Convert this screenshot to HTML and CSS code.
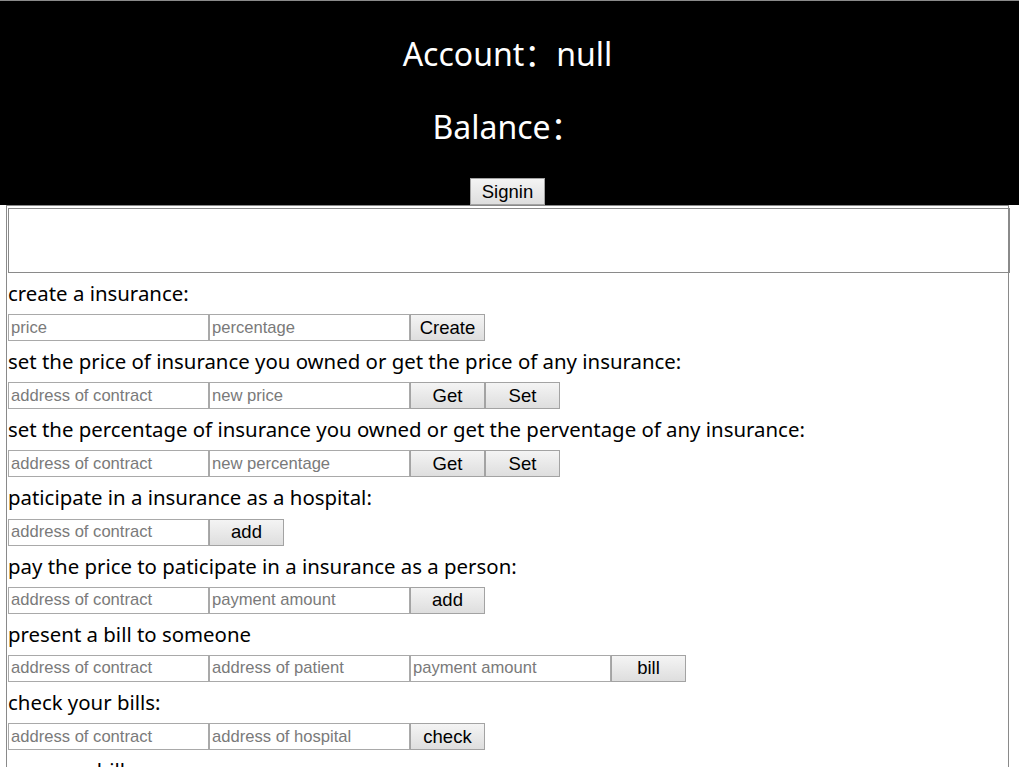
FILE: index.html
```html
<!DOCTYPE html>
<html>
<head>
<meta charset="utf-8">
<title>Insurance</title>
<link rel="stylesheet" href="styles.css">
</head>
<body>
<div class="header">
  <div class="title">Account：null</div>
  <div class="title title-second">Balance：</div>
  <button class="btn">Signin</button>
</div>
<div class="main">
  <div class="output"></div>

  <div class="label">create a insurance:</div>
  <div class="row">
    <input class="field" placeholder="price">
    <input class="field" placeholder="percentage">
    <button class="btn">Create</button>
  </div>

  <div class="label">set the price of insurance you owned or get the price of any insurance:</div>
  <div class="row">
    <input class="field" placeholder="address of contract">
    <input class="field" placeholder="new price">
    <button class="btn">Get</button>
    <button class="btn">Set</button>
  </div>

  <div class="label">set the percentage of insurance you owned or get the perventage of any insurance:</div>
  <div class="row">
    <input class="field" placeholder="address of contract">
    <input class="field" placeholder="new percentage">
    <button class="btn">Get</button>
    <button class="btn">Set</button>
  </div>

  <div class="label">paticipate in a insurance as a hospital:</div>
  <div class="row">
    <input class="field" placeholder="address of contract">
    <button class="btn">add</button>
  </div>

  <div class="label">pay the price to paticipate in a insurance as a person:</div>
  <div class="row">
    <input class="field" placeholder="address of contract">
    <input class="field" placeholder="payment amount">
    <button class="btn">add</button>
  </div>

  <div class="label">present a bill to someone</div>
  <div class="row">
    <input class="field" placeholder="address of contract">
    <input class="field" placeholder="address of patient">
    <input class="field" placeholder="payment amount">
    <button class="btn">bill</button>
  </div>

  <div class="label">check your bills:</div>
  <div class="row">
    <input class="field" placeholder="address of contract">
    <input class="field" placeholder="address of hospital">
    <button class="btn">check</button>
  </div>

  <div class="label">pay your bills:</div>
  <div class="row">
    <input class="field" placeholder="address of contract">
    <input class="field" placeholder="address of hospital">
    <button class="btn">pay</button>
  </div>
</div>
</body>
</html>
```

FILE: styles.css
```css
html, body {
  margin: 0;
  padding: 0;
  background: #ffffff;
}

body {
  font-family: "Noto Sans", "Noto Sans CJK SC", sans-serif;
  color: #000000;
  overflow: hidden;
}

.header {
  box-sizing: border-box;
  height: 205px;
  border-top: 1px solid #8a8a8a;
  background: #000000;
  color: #ffffff;
  text-align: center;
  padding: 33px 4px 0 0;
}

.title {
  font-size: 32px;
  line-height: 40px;
  height: 40px;
}

.title-second {
  margin-top: 33px;
  margin-bottom: 31px;
}

.main {
  box-sizing: border-box;
  margin-left: 6px;
  width: 1003px;
  border: 1px solid #8a8a8a;
  border-bottom: none;
  padding: 2px 1px 0 1px;
}

.output {
  box-sizing: border-box;
  width: 1002px;
  height: 65px;
  border: 1px solid #8a8a8a;
}

.label {
  font-size: 20.4px;
  line-height: 41.17px;
  height: 41.17px;
  white-space: nowrap;
}

.row {
  display: flex;
  height: 27px;
}

.field {
  box-sizing: border-box;
  width: 201px;
  height: 27px;
  margin: 0;
  padding: 0 2px;
  border: 1px solid #a9a9a9;
  font-family: "Liberation Sans", Arial, sans-serif;
  font-size: 16.6px;
  color: #000000;
  outline: none;
}

.field::placeholder {
  color: #7a7a7a;
}

.btn {
  box-sizing: border-box;
  width: 75px;
  height: 27px;
  margin: 0;
  padding: 0;
  border: 1px solid #a3a3a3;
  background: linear-gradient(#f4f4f4, #dedede);
  font-family: "Liberation Sans", Arial, sans-serif;
  font-size: 18.5px;
  color: #000000;
}
```
